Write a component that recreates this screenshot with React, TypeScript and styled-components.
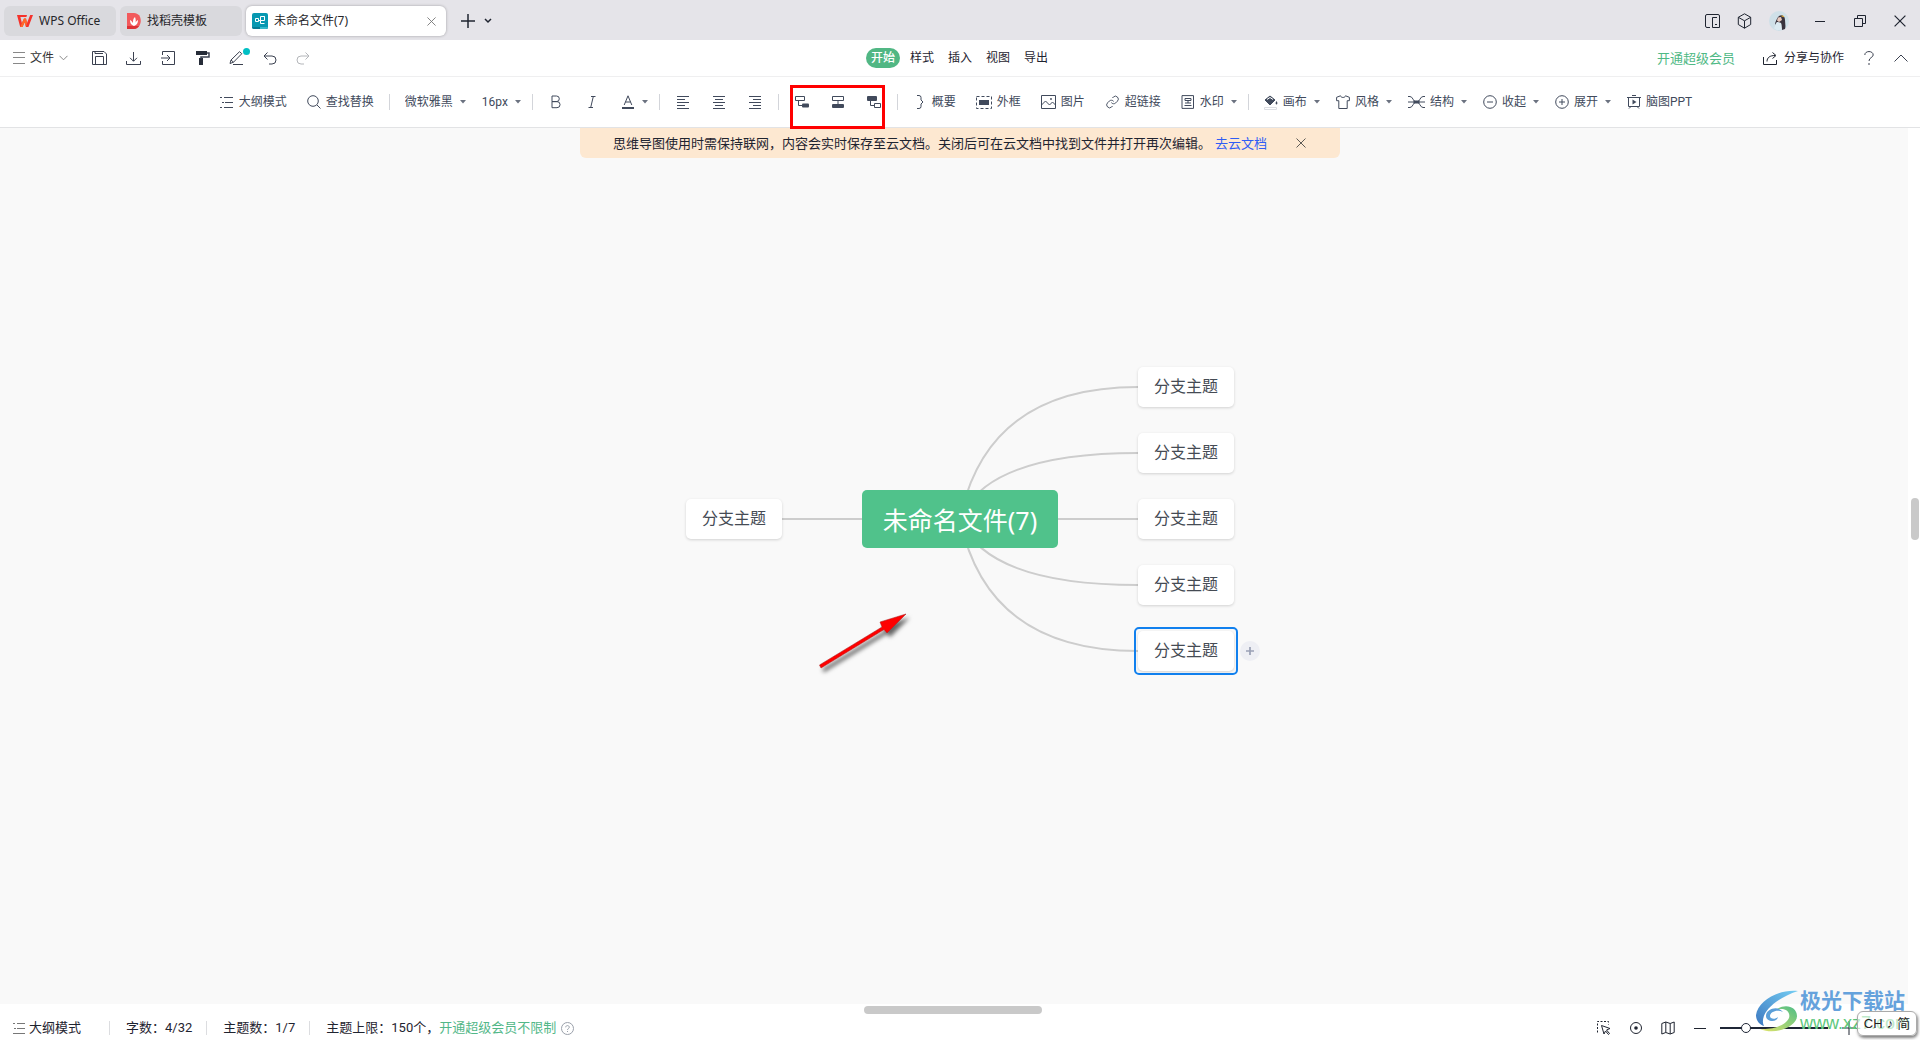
import React from 'react';
import styled, { createGlobalStyle, css } from 'styled-components';

const GlobalStyle = createGlobalStyle`
  * { box-sizing: border-box; }
  body {
    margin: 0;
    font-family: "Noto Sans", "Noto Sans CJK SC", sans-serif;
    font-size: 12px;
    line-height: 18px;
    color: #1f2430;
    background: #fff;
  }
  button, select, input {
    font: inherit;
    color: inherit;
    margin: 0;
    padding: 0;
    border: 0;
    background: none;
  }
  button { cursor: pointer; }
  a { text-decoration: none; }
  svg { display: block; flex: none; }
`;

const Page = styled.div`
  display: flex;
  flex-direction: column;
  min-height: 100vh;
  position: relative;
  overflow: hidden;
`;

/* ---------- title bar ---------- */

const TitleBar = styled.header`
  display: flex;
  align-items: center;
  height: 40px;
  padding: 2px 14px 0 4px;
  background: #e5e4e9;
`;

const TabList = styled.nav`
  display: flex;
  gap: 4px;
`;

const Tab = styled.div<{ $width: number; $pad: number; $active?: boolean }>`
  display: flex;
  align-items: center;
  gap: 6px;
  width: ${p => p.$width}px;
  height: 30px;
  padding: 0 10px 0 ${p => p.$pad}px;
  border-radius: 6px;
  color: #26262a;
  background: ${p => (p.$active ? '#fff' : '#d9d9dd')};
  box-shadow: ${p => (p.$active ? '0 0 3px rgba(0, 0, 0, 0.3)' : 'none')};
`;

const TabButton = styled.button`
  display: flex;
  align-items: center;
  gap: 6px;
  flex: 1;
  white-space: nowrap;
`;

const TabTools = styled.div`
  display: flex;
  align-items: center;
  gap: 9px;
  margin-left: 15px;
`;

const WindowTools = styled.div`
  display: flex;
  align-items: center;
  gap: 17px;
  margin-left: auto;
`;

const WindowControls = styled.div`
  display: flex;
  align-items: center;
  gap: 28px;
  margin-left: 8px;
`;

const IconButton = styled.button<{ $tone?: string }>`
  display: flex;
  align-items: center;
  justify-content: center;
  color: ${p => p.$tone || 'inherit'};
`;

/* ---------- menu row ---------- */

const MenuRow = styled.div`
  display: grid;
  grid-template-columns: 1fr auto 1fr;
  align-items: center;
  height: 37px;
  padding: 0 12px 0 13px;
  border-bottom: 1px solid #efeff0;
  color: #3b4150;
`;

const QuickTools = styled.div`
  display: flex;
  align-items: center;
  gap: 19px;
`;

const FileMenu = styled.button`
  display: flex;
  align-items: center;
  gap: 5px;
  margin-right: 5px;
  color: #333;
`;

const PenWrap = styled.span`
  position: relative;
  display: block;
`;

const PenDot = styled.span`
  position: absolute;
  top: -3px;
  right: -6px;
  width: 7px;
  height: 7px;
  border-radius: 50%;
  background: #00bfc4;
`;

const MenuTabs = styled.nav`
  display: flex;
  padding-bottom: 1px;
`;

const MenuTab = styled.button<{ $active?: boolean }>`
  height: 20px;
  padding: 0 7px;
  line-height: 20px;
  color: #1f2430;
  ${p => p.$active && css`
    padding: 0 5px;
    margin-right: 3px;
    border-radius: 10px;
    font-weight: 500;
    color: #fff;
    background: #51b784;
  `}
`;

const MenuRight = styled.div`
  display: flex;
  align-items: center;
  justify-content: flex-end;
  gap: 20px;
`;

const VipLink = styled.a`
  margin-right: 8px;
  font-size: 13px;
  color: #4fb985;
`;

const ShareButton = styled.button`
  display: flex;
  align-items: center;
  gap: 6px;
  color: #1f2430;
`;

/* ---------- toolbar ---------- */

const Toolbar = styled.div`
  display: flex;
  align-items: center;
  justify-content: center;
  height: 51px;
  padding: 0 8px 0 0;
  border-bottom: 1px solid #e2e3e5;
  color: #414a5c;
  font-family: Roboto, "Noto Sans CJK SC", sans-serif;
`;

const Tool = styled.button<{ $menu?: boolean }>`
  display: flex;
  align-items: center;
  gap: 5px;
  height: 26px;
  padding: 0 ${p => (p.$menu ? 6 : 10)}px 0 10px;
  white-space: nowrap;
  ${p => p.$menu && css`
    svg:last-child { margin-left: 2px; }
  `}
`;

const ToolIcon = styled.button<{ $menu?: boolean }>`
  display: flex;
  align-items: center;
  gap: 7px;
  height: 26px;
  padding: 0 ${p => (p.$menu ? 6 : 11)}px 0 11px;
`;

const ToolSelect = styled.label`
  display: flex;
  align-items: center;
  padding: 0 6px 0 10px;
  select {
    appearance: none;
    padding-right: 12px;
    margin-right: -6px;
  }
`;

const CaretSvg = styled.svg`
  pointer-events: none;
`;

const Divider = styled.span`
  width: 1px;
  height: 16px;
  margin: 0 5px;
  background: #d3d5da;
`;

const TopicGroup = styled.div`
  position: relative;
  display: flex;
  align-items: center;
  align-self: stretch;
`;

const Highlight = styled.span`
  position: absolute;
  z-index: 5;
  top: 8px;
  bottom: -2px;
  left: 6px;
  right: 7px;
  border: 3px solid #ff0000;
  pointer-events: none;
`;

/* ---------- workspace ---------- */

const Workspace = styled.main`
  position: relative;
  flex: 1;
  display: grid;
  grid-template-columns: 1fr 12px;
  grid-template-rows: 1fr 12px;
`;

const Canvas = styled.div`
  background: #f9f9f9;
`;

const VTrack = styled.div`
  padding: 370px 1px 0 3px;
`;

const VThumb = styled.div`
  height: 42px;
  border-radius: 4px;
  background: #c9c9c9;
`;

const HTrack = styled.div`
  display: flex;
  justify-content: center;
  padding: 2px 2px 2px 0;
`;

const HThumb = styled.div`
  width: 178px;
  border-radius: 4px;
  background: #c9c9c9;
`;

const Banner = styled.div`
  position: absolute;
  top: 0;
  left: 50%;
  display: flex;
  align-items: center;
  gap: 4px;
  width: 760px;
  height: 30px;
  padding: 0 34px 0 33px;
  border-radius: 0 0 6px 6px;
  background: #fde8d1;
  transform: translateX(-50%);
  font-size: 13px;
  white-space: nowrap;
  a { color: #2f5df5; }
  button { margin-left: auto; color: #5c5a55; }
`;

const Stage = styled.div`
  position: absolute;
  top: 391px;
  left: 50%;
  width: 0;
  height: 0;
`;

const Links = styled.svg`
  position: absolute;
  left: -300px;
  top: -200px;
`;

const Topic = styled.button<{ $x: number; $y: number }>`
  position: absolute;
  left: ${p => p.$x}px;
  top: ${p => p.$y - 20}px;
  width: 96px;
  height: 40px;
  border-radius: 5px;
  font-size: 16px;
  line-height: 38px;
  padding-bottom: 2px;
  color: #454b54;
  background: #fff;
  box-shadow: 0 1px 3px rgba(0, 0, 0, 0.16);
`;

const Selection = styled.span`
  position: absolute;
  left: 174px;
  top: 108px;
  width: 104px;
  height: 48px;
  border: 2px solid #1180ee;
  border-radius: 5px;
  pointer-events: none;
`;

const AddTopic = styled.button`
  position: absolute;
  left: 280px;
  top: 122px;
  display: flex;
  align-items: center;
  justify-content: center;
  width: 20px;
  height: 20px;
  border-radius: 50%;
  color: #9aa1b5;
  background: #eeeff4;
`;

const RootTopic = styled.button`
  position: absolute;
  left: -98px;
  top: -29px;
  width: 196px;
  height: 58px;
  padding-top: 2px;
  border-radius: 5px;
  font-size: 25px;
  line-height: 56px;
  color: #fff;
  background: #50c28b;
`;

/* ---------- status bar ---------- */

const StatusBar = styled.footer`
  display: flex;
  align-items: center;
  height: 24px;
  padding: 0 64px 0 13px;
  font-size: 13px;
  font-family: Roboto, "Noto Sans CJK SC", sans-serif;
`;

const OutlineButton = styled.button`
  display: flex;
  align-items: center;
  gap: 4px;
  padding-right: 28px;
`;

const Stat = styled.span`
  display: flex;
  align-items: center;
  gap: 5px;
  padding: 0 14px 0 16px;
  line-height: 14px;
  border-left: 1px solid #dcdde0;
  white-space: nowrap;
  a { color: #52b788; }
`;

const ViewTools = styled.div`
  display: flex;
  align-items: center;
  gap: 18px;
  margin-left: auto;
`;

const ZoomRange = styled.input`
  appearance: none;
  width: 108px;
  height: 12px;
  margin: 0 -4px 0 -5px;
  &::-webkit-slider-runnable-track { height: 2px; background: #1f2636; }
  &::-webkit-slider-thumb {
    appearance: none;
    width: 10px;
    height: 10px;
    margin-top: -4px;
    border: 1px solid #1f2636;
    border-radius: 50%;
    background: #fff;
  }
`;

const Watermark = styled.div`
  position: absolute;
  right: 10px;
  bottom: 7px;
  display: flex;
  align-items: center;
  gap: 2px;
  pointer-events: none;
`;

const WatermarkText = styled.div`
  display: flex;
  flex-direction: column;
  font-family: "Liberation Sans", "Noto Sans CJK SC", sans-serif;
  strong {
    font-size: 21px;
    line-height: 24px;
    font-weight: 700;
    color: #65a2dc;
  }
  span {
    font-size: 18px;
    line-height: 20px;
    color: #5cc87c;
  }
`;

const ImeBadge = styled.div`
  position: absolute;
  right: 3px;
  bottom: 4px;
  display: flex;
  align-items: center;
  justify-content: center;
  gap: 4px;
  width: 60px;
  height: 25px;
  border: 1px solid #aaa;
  border-radius: 6px;
  font-family: "Liberation Sans", "Noto Sans CJK SC", sans-serif;
  font-size: 13px;
  color: #222;
  background: rgba(255, 255, 255, 0.6);
  box-shadow: 1px 2px 3px rgba(0, 0, 0, 0.5);
`;

/* ---------- drawings ---------- */

type IconProps = { w?: number; h?: number; box?: string; sw?: number; children: React.ReactNode };
const Icon = ({ w = 14, h = 14, box, sw = 1, children }: IconProps) => (
  <svg width={w} height={h} viewBox={box || `0 0 ${w} ${h}`} fill="none" stroke="currentColor" strokeWidth={sw} aria-hidden="true">
    {children}
  </svg>
);

const Caret = () => (
  <CaretSvg width="6" height="4" viewBox="0 0 6 4" aria-hidden="true">
    <path d="M0 0h6L3 3.4z" fill="#6b7280" />
  </CaretSvg>
);
const Chevron = () => (
  <Icon w={9} h={6}><path d="M.5 .8l4 4 4-4" stroke="#888" /></Icon>
);
const ListIcon = () => (
  <Icon h={12}><path d="M0 1.5h2M4 1.5h9M2 6.5h2M5 6.5h8M0 11.5h2M4 11.5h9" /></Icon>
);
const MenuIcon = () => (
  <Icon w={12} h={12}><path d="M0 .5h12M0 5.5h12M0 11.5h12" stroke="#888" /></Icon>
);
const CloseIcon = ({ s = 10 }: { s?: number }) => (
  <Icon w={s} h={s} box="0 0 10 10"><path d="M.5 .5l9 9M9.500 .5l-9 9" /></Icon>
);
const PlusIcon = ({ s = 14, sw = 2 }: { s?: number; sw?: number }) => (
  <Icon w={s} h={s} box="0 0 14 14" sw={sw}><path d="M7 0v14M0 7h14" /></Icon>
);

const WpsLogo = () => (
  <svg width="16" height="12" viewBox="0 0 16 12" aria-hidden="true">
    <path d="M0 0h10L9.400 2H3.400l1.500 6L7 3.500h2l1 4.500L13.200 0H16l-4.600 12H9L7.700 7.200 5.500 12H3.200z" fill="#f5322b" />
    <path d="M7 3.500h2l1 4.500L9 12 7.700 7.200 5.500 12H3.200l1.700-4z" fill="#ff6a2a" />
  </svg>
);
const DocerLogo = () => (
  <svg width="14" height="16" viewBox="0 0 14 16" aria-hidden="true">
    <path d="M0 0h7c9 0 9 15 0 16H0z" fill="#f25a5c" />
    <path d="M0 13h12c-2 3-5 3-6 3H0z" fill="#de3236" />
    <path d="M7 13c-3-1-4-3-4-6 2 1 2 2 3 3 0-3 0-4 2-6 1 3 1 4 0 6 1-2 2-2 3-3 0 3-1 5-4 6z" fill="#fff" />
  </svg>
);
const MindLogo = () => (
  <svg width="16" height="16" viewBox="0 0 16 16" aria-hidden="true">
    <rect width="16" height="16" rx="2" fill="#0798b1" />
    <path d="M0 14h16a2 2 0 0 1-2 2H2a2 2 0 0 1-2-2z" fill="#067b94" />
    <path d="M8 14h8a2 2 0 0 1-2 2H8z" fill="#35b9cc" />
    <path d="M3.500 5.500h3v3h-3zM6.500 7.500h2M12.500 3.500h-3M12.500 10.500h-4v-3h4M8.500 7.500v-4h4v4" fill="none" stroke="#fff" />
  </svg>
);
const Avatar = () => (
  <svg width="20" height="20" viewBox="0 0 20 20" aria-hidden="true">
    <circle cx="10" cy="10" r="10" fill="#cfe0e8" />
    <path d="M10 5c3-2 6 0 6 4 0 3 1 6 0 9l-3 1c-1-2 0-5-1-7L8 11l-2 3c0-3 2-7 4-9z" fill="#38333d" />
    <path d="M9 6.500l3-.5 1 3-3 2-2-1.500z" fill="#e9c9bd" />
    <path d="M8 11l4 1 1 6.500-5 .8-3-2z" fill="#dcebf2" />
    <path d="M12.500 4.800l2.500 1" stroke="#e5b13a" strokeWidth="1.200" />
  </svg>
);

const BRANCHES = [-132, -66, 0, 66, 132];

const WatermarkLogo = () => (
  <svg width="42" height="42" viewBox="0 0 42 42" aria-hidden="true">
    <defs>
      <linearGradient id="wmBlue" x1="0" y1="1" x2="1" y2="0">
        <stop offset="0" stopColor="#3d78c0" />
        <stop offset="1" stopColor="#74cdf3" />
      </linearGradient>
      <linearGradient id="wmGreen" x1="0" y1="1" x2="1" y2="0">
        <stop offset="0" stopColor="#e4e56a" />
        <stop offset="1" stopColor="#4dbd86" />
      </linearGradient>
    </defs>
    <path d="M42 1C22-1 2 11 0 25c0 6 4 10 8 11C3 26 15 10 42 1z" fill="url(#wmBlue)" />
    <path d="M4 39c13 1 26-4 29-11 2-7-5-11-13-8 8-7 21-4 21 6C41 36 20 46 4 39z" fill="url(#wmGreen)" />
    <path d="M27 22c-6-3-13 0-13 4 0 3 5 4 8 1-1 6-12 5-12-1 0-7 12-11 17-4z" fill="#5b9fd8" />
  </svg>
);

const ALIGNMENTS = [
  { name: '左对齐', d: 'M0 .5h12M0 3.500h8M0 6.500h12M0 9.500h8M0 12.500h12' },
  { name: '居中', d: 'M0 .5h12M2 3.500h8M0 6.500h12M2 9.500h8M0 12.500h12' },
  { name: '右对齐', d: 'M0 .5h12M4 3.500h8M0 6.500h12M4 9.500h8M0 12.500h12' },
];

export default function App() {
  return (
    <Page>
      <GlobalStyle />
      <TitleBar>
        <TabList>
          <Tab $width={112} $pad={13}><TabButton><WpsLogo />WPS Office</TabButton></Tab>
          <Tab $width={122} $pad={7}><TabButton><DocerLogo />找稻壳模板</TabButton></Tab>
          <Tab $width={200} $pad={6} $active>
            <TabButton><MindLogo />未命名文件(7)</TabButton>
            <IconButton aria-label="关闭标签" $tone="#777"><CloseIcon s={9} /></IconButton>
          </Tab>
        </TabList>
        <TabTools>
          <IconButton aria-label="新建"><PlusIcon sw={1.5} /></IconButton>
          <IconButton aria-label="标签列表"><Icon w={8} h={6} sw={1.5}><path d="M1 1l3 3 3-3" /></Icon></IconButton>
        </TabTools>
        <WindowTools>
          <IconButton aria-label="分栏"><Icon w={15}><path d="M5 13.500H2a1.500 1.500 0 0 1-1.500-1.500V2A1.500 1.500 0 0 1 2 .5h11A1.500 1.500 0 0 1 14.500 2v11.500h-7v-10H12M10 10.500h2" /></Icon></IconButton>
          <IconButton aria-label="应用"><Icon w={15} h={16}><path d="M7.500 .8l6.200 3.500v7.200l-6.200 3.700-6.200-3.700V4.300zM1.300 4.300l6.200 3.500 6.200-3.500M7.500 7.800v7.400" /></Icon></IconButton>
          <IconButton aria-label="账户"><Avatar /></IconButton>
          <WindowControls>
            <IconButton aria-label="最小化"><Icon w={12} h={12}><path d="M1 6.500h10" /></Icon></IconButton>
            <IconButton aria-label="还原"><Icon w={12} h={12}><path d="M.5 3.500h8v8h-8zM3.500 3.500v-3h8v8h-3" /></Icon></IconButton>
            <IconButton aria-label="关闭"><CloseIcon s={12} /></IconButton>
          </WindowControls>
        </WindowTools>
      </TitleBar>

      <MenuRow>
        <QuickTools>
          <FileMenu><MenuIcon />文件<Chevron /></FileMenu>
          <IconButton aria-label="保存"><Icon w={15}><path d="M.5 .5h11.500l2.500 2.500v10.500H.5zM3.500 13.500v-8h8v8M3 .5v2h8" /></Icon></IconButton>
          <IconButton aria-label="下载"><Icon w={15} h={13}><path d="M7.500 0v9M4 5.800l3.500 3.500L11 5.800M.5 9v3.500h14V9" /></Icon></IconButton>
          <IconButton aria-label="导入"><Icon w={16}><path d="M2.500 4V.5h12v13h-12V10M1 7h9M7 4l3 3-3 3" /></Icon></IconButton>
          <IconButton aria-label="格式刷"><Icon w={15}><path d="M1 0h11v4H1zM4 7h4v7H4z" fill="#262c38" stroke="none" /><path d="M12 2h2v4H6v2" strokeWidth="1.500" /></Icon></IconButton>
          <IconButton aria-label="画笔"><PenWrap><Icon w={15}><path d="M1 12.500l1-3.500L10.500 .7l2.300 2L4.500 11.200zM2 9l2.500 2.200M4 13.500h10" /></Icon><PenDot /></PenWrap></IconButton>
          <IconButton aria-label="撤销"><Icon h={13}><path d="M4.500 .5L1 4l3.500 3.500M1 4h8a4 4 0 0 1 0 8H6" /></Icon></IconButton>
          <IconButton aria-label="重做" $tone="#b4b6ba"><Icon h={13}><path d="M9.500 .5L13 4 9.500 7.500M13 4H5a4 4 0 0 0 0 8h3" /></Icon></IconButton>
        </QuickTools>
        <MenuTabs>
          <MenuTab $active>开始</MenuTab>
          <MenuTab>样式</MenuTab>
          <MenuTab>插入</MenuTab>
          <MenuTab>视图</MenuTab>
          <MenuTab>导出</MenuTab>
        </MenuTabs>
        <MenuRight>
          <VipLink href="#vip">开通超级会员</VipLink>
          <ShareButton><Icon w={15} h={13}><path d="M.5 5v7.500h13V8M4 9.500c0-4 3-6 8-6M9.500 .5l3.500 3-3.500 3" /></Icon>分享与协作</ShareButton>
          <IconButton aria-label="帮助"><Icon w={10} h={14}><path d="M.8 4C.8-.6 9.200-.6 9.200 4 9.200 6.500 5 6.500 5 10M5 12v2" /></Icon></IconButton>
          <IconButton aria-label="收起功能区"><Icon w={14} h={8}><path d="M.5 7.500L7 1l6.500 6.500" /></Icon></IconButton>
        </MenuRight>
      </MenuRow>

      <Toolbar>
        <Tool><ListIcon />大纲模式</Tool>
        <Tool><Icon><circle cx="6" cy="6" r="5.300" /><path d="M10 10l3.500 3.500" /></Icon>查找替换</Tool>
        <Divider />
        <ToolSelect><select aria-label="字体"><option>微软雅黑</option></select><Caret /></ToolSelect>
        <ToolSelect><select aria-label="字号"><option>16px</option></select><Caret /></ToolSelect>
        <Divider />
        <ToolIcon aria-label="加粗"><Icon><path d="M3 1h4.500a2.800 2.800 0 0 1 0 5.600H3zM3 6.600h5a3 3 0 0 1 0 6.100H3z" /></Icon></ToolIcon>
        <ToolIcon aria-label="斜体"><Icon><path d="M6 1.500h4.500M3.500 12.500H8M8.300 1.500l-2.600 11" /></Icon></ToolIcon>
        <ToolIcon aria-label="文字颜色" $menu><Icon><path d="M3.200 10L7 .8 10.800 10M4.500 7h5" /><path d="M1 13h12" strokeWidth="2" /></Icon><Caret /></ToolIcon>
        <Divider />
        {ALIGNMENTS.map(a => (
          <ToolIcon key={a.name} aria-label={a.name}><Icon h={13} box="-1 0 14 13"><path d={a.d} /></Icon></ToolIcon>
        ))}
        <Divider />
        <TopicGroup>
          <ToolIcon aria-label="子主题"><Icon><path d="M.5 1.500h9v4h-9zM3.500 5.500v5H7" /><rect x="7" y="8.500" width="7" height="4" rx="1" fill="currentColor" stroke="none" /></Icon></ToolIcon>
          <ToolIcon aria-label="同级主题"><Icon><path d="M1.500 1.500h11v4h-11zM7 5.500v4" /><rect x="1" y="9" width="12" height="4" rx="1" fill="currentColor" stroke="none" /></Icon></ToolIcon>
          <ToolIcon aria-label="父主题"><Icon><rect x="0" y="1" width="10" height="5" rx="1" fill="currentColor" stroke="none" /><path d="M3.500 6v4.500H7M7.500 8.500h6v4h-6z" /></Icon></ToolIcon>
          <Highlight />
        </TopicGroup>
        <Divider />
        <Tool><Icon><path d="M4 .5h2a2 2 0 0 1 2 2V5l2 2-2 2v2.500a2 2 0 0 1-2 2H4" /></Icon>概要</Tool>
        <Tool><Icon w={16} h={13}><path d="M.5 .5h15v12H.5z" strokeDasharray="3 2" /><rect x="3" y="4" width="10" height="5" fill="currentColor" stroke="none" /></Icon>外框</Tool>
        <Tool><Icon w={15}><path d="M.5 .5h14v13H.5zM.5 10l4-4 4 4 3-3 3 3" /><circle cx="10" cy="4" r=".6" /></Icon>图片</Tool>
        <Tool><Icon w={15} box="0 0 24 24" sw={1.6}><path d="M10 13a5 5 0 0 0 7.540.540l3-3a5 5 0 0 0-7.070-7.070l-1.720 1.710M14 11a5 5 0 0 0-7.540-.540l-3 3a5 5 0 0 0 7.070 7.070l1.710-1.710" /></Icon>超链接</Tool>
        <Tool $menu><Icon><path d="M1 .6h11.500v12.800H1z" /><path d="M4 3.500h6v2H4zM7 5v3M4 8h6M3.500 10.500h7" /></Icon>水印<Caret /></Tool>
        <Divider />
        <Tool $menu><Icon h={18} box="0 -3 14 18"><path d="M1 4l5-4 5 4-5 5z" fill="currentColor" /><path d="M3 3.500l3-2 3 2" stroke="#fff" /><path d="M12.500 5c2 3 0 3.500 0 3.500s-2-.5 0-3.500z" fill="currentColor" stroke="none" /><path d="M.5 11.500h12v2H.5z" stroke="#dcdee3" /></Icon>画布<Caret /></Tool>
        <Tool $menu><Icon><path d="M4.500 .8L.6 2.300v3.400h2.200v7.800h8.400V5.700h2.200V2.300L9.500 .8C9 3 5 3 4.500 .8z" /></Icon>风格<Caret /></Tool>
        <Tool $menu><Icon w={17}><path d="M0 1.500h2c3 0 3 5.500 6.500 5.500S12 1.500 15 1.500h2M0 12.500h2c3 0 3-5.500 6.500-5.500s3.500 5.500 6.500 5.500h2M0 7h17" /><rect x="5.500" y="5.500" width="6" height="3" fill="currentColor" stroke="none" /></Icon>结构<Caret /></Tool>
        <Tool $menu><Icon><circle cx="7" cy="7" r="6.300" /><path d="M4 7h6" /></Icon>收起<Caret /></Tool>
        <Tool $menu><Icon><circle cx="7" cy="7" r="6.300" /><path d="M4 7h6M7 4v6" /></Icon>展开<Caret /></Tool>
        <Tool><Icon><path d="M0 2.500h14M1.500 2.500v9h11v-9M5 .5h4M4 11.500l-2 2M10 11.500l2 2" /><path d="M5.500 4.500L9.500 7l-4 2.500z" fill="currentColor" stroke="none" /></Icon>脑图PPT</Tool>
      </Toolbar>

      <Workspace>
        <Canvas />
        <VTrack><VThumb /></VTrack>
        <HTrack><HThumb /></HTrack>
        <Stage>
          <Links width="600" height="400" viewBox="-300 -200 600 400" aria-hidden="true">
            <defs>
              <filter id="arrowShadow" x="-20%" y="-20%" width="150%" height="150%">
                <feDropShadow dx="3" dy="4" stdDeviation="2" floodOpacity="0.6" />
              </filter>
            </defs>
            <g fill="none" stroke="#cdcdcd" strokeWidth="2">
              <path d="M-180 0H0" />
              {BRANCHES.map(y => <path key={y} d={`M0 0Q27 ${y} 178 ${y}`} />)}
            </g>
            <path d="M-140.500 146L-78 108L-80 103L-54 95L-73 114L-76 110.500L-139 149z" fill="#ff0404" stroke="#a01616" strokeWidth=".5" filter="url(#arrowShadow)" />
          </Links>
          <Topic $x={-274} $y={0}>分支主题</Topic>
          {BRANCHES.map(y => <Topic key={y} $x={178} $y={y}>分支主题</Topic>)}
          <Selection />
          <AddTopic aria-label="添加主题"><PlusIcon s={8} sw={3} /></AddTopic>
          <RootTopic>未命名文件(7)</RootTopic>
        </Stage>
        <Banner>
          <span>思维导图使用时需保持联网，内容会实时保存至云文档。关闭后可在云文档中找到文件并打开再次编辑。</span>
          <a href="#cloud">去云文档</a>
          <IconButton aria-label="关闭提示"><CloseIcon /></IconButton>
        </Banner>
      </Workspace>

      <StatusBar>
        <OutlineButton><Icon w={12} h={12}><path d="M0 1.500h2M4 1.500h8M1 6.500h2M4 6.500h8M0 11.500h12" stroke="#777" /></Icon>大纲模式</OutlineButton>
        <Stat>字数：4/32</Stat>
        <Stat>主题数：1/7</Stat>
        <Stat>
          <span>主题上限：150个，<a href="#vip">开通超级会员不限制</a></span>
          <Icon w={13} h={13}><circle cx="6.500" cy="6.500" r="6" stroke="#9aa0aa" /><path d="M4.700 5.300c0-2.300 3.600-2.300 3.600 0 0 1.200-1.800 1.200-1.800 2.700M6.500 9v1" stroke="#9aa0aa" /></Icon>
        </Stat>
        <ViewTools>
          <IconButton aria-label="框选"><Icon><path d="M.5 11.500v-11h11v3" strokeDasharray="2 1.500" /><path d="M4.500 4.500l8.500 3-3.500 1.500 3 3.500-1 1-3-3.500L7 13z" /></Icon></IconButton>
          <IconButton aria-label="定位"><Icon><circle cx="7" cy="7" r="5.500" /><circle cx="7" cy="7" r="1.800" fill="currentColor" stroke="none" /></Icon></IconButton>
          <IconButton aria-label="导航图"><Icon><path d="M.8 2.500L4.800 1l4.400 1.500 4-1.500v10.500l-4 1.500-4.400-1.500-4 1.500zM4.800 1v10.500M9.200 2.500V13" /></Icon></IconButton>
          <IconButton aria-label="缩小"><Icon><path d="M1 7.500h12" /></Icon></IconButton>
          <ZoomRange type="range" min={0} max={100} defaultValue={21} aria-label="缩放" />
          <IconButton aria-label="放大"><PlusIcon sw={1} /></IconButton>
        </ViewTools>
      </StatusBar>

      <Watermark>
        <WatermarkLogo />
        <WatermarkText>
          <strong>极光下载站</strong>
          <span>www.xz7.com</span>
        </WatermarkText>
      </Watermark>
      <ImeBadge><span>CH</span><span>♪</span><span>简</span></ImeBadge>
    </Page>
  );
}
